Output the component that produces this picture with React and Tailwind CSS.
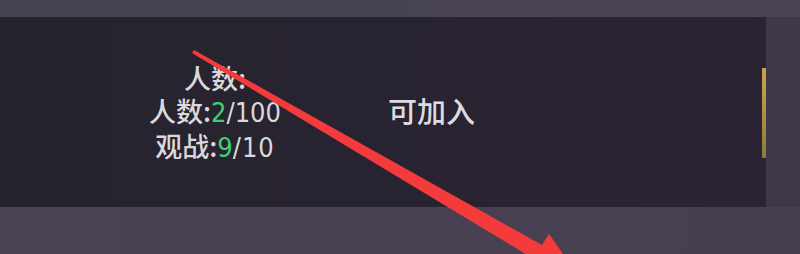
import React from "react";

export default function App() {
  const font = { fontFamily: '"Noto Sans CJK SC", "Noto Sans", sans-serif' };
  const num = { fontFamily: '"Liberation Sans Narrow", "DejaVu Sans Condensed", "Liberation Sans", sans-serif' };
  return (
    <div className="relative w-[800px] h-[254px] overflow-hidden bg-[#494152] flex flex-col" style={font}>
      <div className="h-[17px] w-full bg-gradient-to-r from-[#45424f] to-[#4a4353]" />
      <div className="flex h-[190px] w-full">
        <div className="flex w-[766px] h-full bg-gradient-to-r from-[#26232e] to-[#2b2333]">
          <div className="ml-[135px] mt-[44px] w-[160px] flex flex-col items-center text-[27px] leading-[33px] font-medium text-[#d9d9dc]">
            <div>人数:</div>
            <div>人数:<span style={num} className="text-[#3fcf72]">2</span><span style={num}>/100</span></div>
            <div>观战:<span style={num} className="text-[#3fcf72]">9</span><span style={num} className="tracking-[1px]">/10</span></div>
          </div>
          <div className="ml-[93px] mt-[77px] text-[29px] leading-[33px] font-medium text-[#dcdcdf]">可加入</div>
          <div className="ml-auto mt-[51px] w-[4px] h-[90px] bg-gradient-to-b from-[#c9a64a] to-[#8e7a3c]" />
        </div>
        <div className="flex-1 bg-[#3f3847]" />
      </div>
      <div className="flex-1 w-full bg-gradient-to-r from-[#4a4253] to-[#473f50]" />
      <svg className="absolute left-0 top-0" width="800" height="254" viewBox="0 0 800 254">
        <polygon
          points="192,53 194,50 542,245 549,234 577,274 528,270 534,259"
          fill="#f43b3b"
        />
      </svg>
    </div>
  );
}
